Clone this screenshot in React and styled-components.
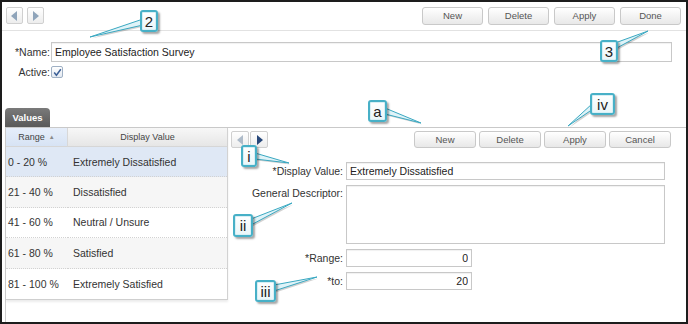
import React from 'react';
import styled, { createGlobalStyle } from 'styled-components';

const Global = createGlobalStyle`
  html, body { margin: 0; padding: 0; background: #fff; }
  body { font-family: "Liberation Sans", Arial, sans-serif; }
  * { box-sizing: border-box; }
`;

const Frame = styled.div`
  position: relative;
  width: 688px;
  height: 324px;
  border: 2px solid #1d1d1d;
  background: #fff;
  display: flex;
  flex-direction: column;
  overflow: hidden;
  font-family: "Liberation Sans", Arial, sans-serif;
  color: #333;
`;

const TopBar = styled.div`
  height: 29px;
  flex: none;
  display: flex;
  align-items: center;
  justify-content: space-between;
  padding: 0 5px 1px 4px;
  border-bottom: 1px solid #e2e2e2;
`;

const NavGroup = styled.div`
  display: flex;
  gap: ${p => p.$gap}px;
`;

const NavBtn = styled.div`
  width: ${p => p.$w}px;
  height: 17px;
  border: 1px solid #d0d0d0;
  border-radius: 2px;
  background: linear-gradient(#ffffff, #ededed);
  display: flex;
  align-items: center;
  justify-content: center;
`;

const Arrow = styled.span`
  width: 0;
  height: 0;
  border-top: 5px solid transparent;
  border-bottom: 5px solid transparent;
  ${p => (p.$dir === 'left'
    ? `border-right: 6px solid ${p.$color}; margin-right: 1px;`
    : `border-left: 6px solid ${p.$color}; margin-left: 1px;`)}
`;

const BtnGroup = styled.div`
  display: flex;
  gap: ${p => p.$gap}px;
`;

const Btn = styled.div`
  width: ${p => p.$w}px;
  height: ${p => p.$h}px;
  border: 1px solid #c9c9c9;
  border-radius: 3px;
  background: linear-gradient(#ffffff, #e8e8e8);
  color: #555;
  font-size: 9.5px;
  display: flex;
  align-items: center;
  justify-content: center;
`;

const HeadForm = styled.div`
  display: grid;
  grid-template-columns: 48px 1fr;
  column-gap: 1px;
  row-gap: 4px;
  padding: 11px 14px 0 0;
  align-items: center;
`;

const HeadLabel = styled.label`
  font-size: 10.5px;
  color: #333;
  text-align: right;
  white-space: nowrap;
`;

const TextInput = styled.input`
  height: ${p => p.$h || 18}px;
  width: ${p => (p.$w ? `${p.$w}px` : '100%')};
  border: 1px solid #c8c8c8;
  box-shadow: inset 0 1px 1px rgba(0, 0, 0, 0.06);
  padding: 0 3px;
  font-family: "Liberation Sans", Arial, sans-serif;
  font-size: 10.5px;
  color: #222;
  text-align: ${p => (p.$right ? 'right' : 'left')};
  background: #fff;
  outline: none;
`;

const TextArea = styled.textarea`
  height: 59px;
  width: 100%;
  border: 1px solid #c8c8c8;
  box-shadow: inset 0 1px 1px rgba(0, 0, 0, 0.06);
  resize: none;
  padding: 2px 3px;
  font-family: "Liberation Sans", Arial, sans-serif;
  font-size: 10.5px;
  outline: none;
`;

const CheckBox = styled.span`
  width: 12px;
  height: 12px;
  border: 1px solid #9fb0c4;
  border-radius: 2px;
  background: linear-gradient(#ffffff, #e3e9f1);
  display: flex;
  align-items: center;
  justify-content: center;
`;

const TabStrip = styled.div`
  margin-top: 30px;
  padding-left: 3px;
  display: flex;
  flex: none;
`;

const Tab = styled.div`
  width: 45px;
  height: 19px;
  border-radius: 4px 4px 0 0;
  background: linear-gradient(#7a7a7a, #595959);
  color: #fff;
  font-weight: bold;
  font-size: 9.5px;
  display: flex;
  align-items: center;
  justify-content: center;
`;

const Panel = styled.div`
  flex: 1;
  margin-left: 3px;
  border-top: 1px solid #c9c9c9;
  border-left: 1px solid #cfcfcf;
  display: flex;
  min-height: 0;
`;

const Grid = styled.div`
  width: 222px;
  align-self: flex-start;
  border-right: 1px solid #d2d2d2;
  border-bottom: 1px solid #cfcfcf;
  box-shadow: 0 2px 2px rgba(0, 0, 0, 0.08);
  display: grid;
  grid-template-columns: 62px 1fr;
`;

const HeadCell = styled.div`
  height: 19px;
  border-bottom: 1px solid #d6d6d6;
  border-right: ${p => (p.$first ? '1px solid #d8d8d8' : 'none')};
  background: ${p => (p.$sorted ? 'linear-gradient(#e6eefa, #d7e3f4)' : 'linear-gradient(#f7f7f7, #e6e6e6)')};
  font-size: 9px;
  color: #444;
  display: flex;
  align-items: center;
  justify-content: center;
  gap: 4px;
`;

const SortMark = styled.span`
  font-size: 6px;
  color: #8a8a8a;
`;

const Cell = styled.div`
  height: 30.4px;
  border-bottom: ${p => (p.$last ? 'none' : '1px dotted #d2d2d2')};
  background: ${p => (p.$selected ? '#dfe8f5' : p.$alt ? '#f6f6f6' : '#fff')};
  font-size: 10.5px;
  color: #333;
  display: flex;
  align-items: center;
  padding-left: ${p => p.$pad}px;
  white-space: nowrap;
`;

const Detail = styled.div`
  flex: 1;
  display: flex;
  flex-direction: column;
`;

const DetailBar = styled.div`
  height: 22px;
  padding: 3px 15px 0 3px;
  display: flex;
  justify-content: space-between;
  align-items: flex-start;
`;

const DetailForm = styled.div`
  display: grid;
  grid-template-columns: 115px 319px;
  column-gap: 3px;
  row-gap: 5px;
  padding-top: 12px;
  align-items: center;
`;

const FieldLabel = styled.label`
  font-size: 10.5px;
  color: #333;
  text-align: right;
  white-space: nowrap;
  align-self: ${p => (p.$top ? 'start' : 'center')};
  padding-top: ${p => (p.$top ? 2 : 0)}px;
`;

const Overlay = styled.svg`
  position: absolute;
  left: -2px;
  top: -2px;
  width: 688px;
  height: 324px;
  pointer-events: none;
`;

const Bubble = styled.div`
  position: absolute;
  left: ${p => p.$x - 2}px;
  top: ${p => p.$y - 2}px;
  width: ${p => p.$w}px;
  height: ${p => p.$h}px;
  border: 2px solid #47b0c7;
  border-radius: 3px;
  background: linear-gradient(#ffffff, #eaf6f9);
  box-shadow: 2px 2px 2px rgba(0, 0, 0, 0.35), inset 0 0 0 1px #d8eff5;
  font-family: "Liberation Sans", Arial, sans-serif;
  font-size: 15px;
  color: #222;
  display: flex;
  align-items: center;
  justify-content: center;
  line-height: 1;
`;

const rows = [
  ['0 - 20 %', 'Extremely Dissatisfied'],
  ['21 - 40 %', 'Dissatisfied'],
  ['41 - 60 %', 'Neutral / Unsure'],
  ['61 - 80 %', 'Satisfied'],
  ['81 - 100 %', 'Extremely Satisfied'],
];

const callouts = [
  { t: '2', x: 140, y: 10, w: 18, h: 22, wedge: [[143, 19], [143, 25], [90, 37]] },
  { t: '3', x: 600, y: 40, w: 18, h: 22, wedge: [[615, 43], [615, 49], [648, 31]] },
  { t: 'a', x: 368, y: 100, w: 19, h: 22, wedge: [[385, 108], [385, 114], [421, 123]] },
  { t: 'iv', x: 590, y: 93, w: 25, h: 22, wedge: [[593, 103], [593, 109], [568, 126]] },
  { t: 'i', x: 241, y: 145, w: 16, h: 22, wedge: [[255, 153], [255, 159], [289, 163]] },
  { t: 'ii', x: 233, y: 214, w: 20, h: 23, wedge: [[251, 219], [251, 225], [292, 203]] },
  { t: 'iii', x: 255, y: 280, w: 21, h: 22, wedge: [[274, 285], [274, 291], [317, 277]] },
];

function Callouts() {
  return (
    <>
      <Overlay viewBox="0 0 688 324">
        {callouts.map(c => {
          const pts = c.wedge.map(p => p.join(',')).join(' ');
          const sh = c.wedge.map(p => `${p[0] + 1.5},${p[1] + 1.5}`).join(' ');
          return (
            <g key={c.t}>
              <polygon points={sh} fill="rgba(0,0,0,0.18)" />
              <polygon points={pts} fill="#dff3f8" stroke="#3aa8c1" strokeWidth="1" strokeLinejoin="round" />
            </g>
          );
        })}
      </Overlay>
      {callouts.map(c => (
        <Bubble key={c.t} $x={c.x} $y={c.y} $w={c.w} $h={c.h}>{c.t}</Bubble>
      ))}
    </>
  );
}

export default function App() {
  return (
    <>
      <Global />
      <Frame>
        <TopBar>
          <NavGroup $gap={4}>
            <NavBtn $w={17}><Arrow $dir="left" $color="#8fa4ba" /></NavBtn>
            <NavBtn $w={17}><Arrow $dir="right" $color="#8fa4ba" /></NavBtn>
          </NavGroup>
          <BtnGroup $gap={5}>
            <Btn $w={61} $h={18}>New</Btn>
            <Btn $w={61} $h={18}>Delete</Btn>
            <Btn $w={61} $h={18}>Apply</Btn>
            <Btn $w={61} $h={18}>Done</Btn>
          </BtnGroup>
        </TopBar>

        <HeadForm>
          <HeadLabel>*Name:</HeadLabel>
          <TextInput $h={20} readOnly value="Employee Satisfaction Survey" />
          <HeadLabel>Active:</HeadLabel>
          <CheckBox>
            <svg width="9" height="9" viewBox="0 0 9 9">
              <path d="M1.2 4.6 L3.4 7.2 L7.8 1.2" fill="none" stroke="#3c5f96" strokeWidth="1.5" />
            </svg>
          </CheckBox>
        </HeadForm>

        <TabStrip>
          <Tab>Values</Tab>
        </TabStrip>

        <Panel>
          <Grid>
            <HeadCell $first $sorted>Range <SortMark>▲</SortMark></HeadCell>
            <HeadCell>Display Value</HeadCell>
            {rows.map((r, i) => (
              <React.Fragment key={r[0]}>
                <Cell $pad={2} $selected={i === 0} $alt={i % 2 === 1} $last={i === rows.length - 1}>{r[0]}</Cell>
                <Cell $pad={5} $selected={i === 0} $alt={i % 2 === 1} $last={i === rows.length - 1}>{r[1]}</Cell>
              </React.Fragment>
            ))}
          </Grid>

          <Detail>
            <DetailBar>
              <NavGroup $gap={1}>
                <NavBtn $w={18}><Arrow $dir="left" $color="#aebbc9" /></NavBtn>
                <NavBtn $w={18}><Arrow $dir="right" $color="#27477a" /></NavBtn>
              </NavGroup>
              <BtnGroup $gap={3}>
                <Btn $w={62} $h={17}>New</Btn>
                <Btn $w={62} $h={17}>Delete</Btn>
                <Btn $w={62} $h={17}>Apply</Btn>
                <Btn $w={62} $h={17}>Cancel</Btn>
              </BtnGroup>
            </DetailBar>
            <DetailForm>
              <FieldLabel>*Display Value:</FieldLabel>
              <TextInput readOnly value="Extremely Dissatisfied" />
              <FieldLabel $top>General Descriptor:</FieldLabel>
              <TextArea readOnly value="" />
              <FieldLabel>*Range:</FieldLabel>
              <TextInput $w={126} $right readOnly value="0" />
              <FieldLabel>*to:</FieldLabel>
              <TextInput $w={126} $right readOnly value="20" />
            </DetailForm>
          </Detail>
        </Panel>

        <Callouts />
      </Frame>
    </>
  );
}
